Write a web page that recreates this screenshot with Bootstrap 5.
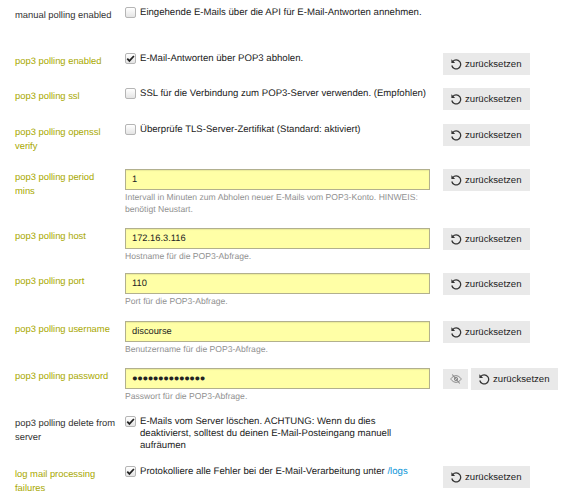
<!DOCTYPE html>
<html lang="de">
<head>
<meta charset="utf-8">
<title>Einstellungen</title>
<link rel="stylesheet" href="https://cdn.jsdelivr.net/npm/bootstrap@5.3.0/dist/css/bootstrap.min.css">
<style>
html,body{margin:0;background:#fff;overflow:hidden}
body{font-family:"Liberation Sans",Arial,sans-serif;font-size:9.6px;line-height:12px;color:#222;height:500px;text-rendering:geometricPrecision}
.setlist{padding:4px 15px 0}
.setrow{display:grid;grid-template-columns:110px 305px auto;align-items:start}
.setname{font-size:9.4px;line-height:14px;padding-right:9.5px;padding-top:1px;color:#333}
.setname.chg{color:#a8a800}
.setbody{min-width:0}
.setact{display:flex;gap:3px;margin-left:13px}
.h49{height:49px}.h35{height:35px}.h36{height:36px}.h45{height:45px}.h59{height:59px}.h48{height:48px}.h47{height:47px}.h51{height:51px}
.firstname{padding-top:4px}
.firstbody{grid-column:2/4;padding-top:3px}
.chkline{display:flex;gap:4px;align-items:flex-start}
.chkbox{flex:none;width:11px;height:11px;margin-top:0;border:1px solid #b5b5b5;border-radius:2px;background:linear-gradient(#fff,#e4e4e4);display:flex;align-items:center;justify-content:center}
.chkbox svg{width:9px;height:9px;display:block}
.chktext{max-width:262px}
.fieldbox{display:block;width:305px;height:21px;border:1px solid #b2b08e;background:#ffffa6;padding:0 6px;font-size:9.3px;line-height:19px;color:#222;box-shadow:inset 0 1px 1px rgba(0,0,0,.08)}
.pwdots{letter-spacing:-.4px}
.fieldhelp{color:#919191;font-size:8.6px;line-height:11.5px;margin-top:2px}
.rstbtn{display:inline-flex;align-items:center;gap:3px;height:22px;padding:0 8px 0 7px;background:#e9e9e9;color:#222;font-size:9.6px;border:0;border-radius:0;white-space:nowrap}
.eyebtn{display:inline-flex;align-items:center;justify-content:center;width:25px;height:20px;margin-top:1px;background:#e9e9e9;border:0;padding:0}
.rsticon{width:12px;height:12px;display:block}
.logslink{color:#0a95d8;text-decoration:none}
.delbody{padding-top:1px}
</style>
</head>
<body>
<svg width="0" height="0" class="d-block" style="position:absolute" aria-hidden="true"><defs>
<symbol id="undo" viewBox="0 0 16 16"><path d="M3.6 4.8A6 6 0 1 1 2.4 10" fill="none" stroke="#333" stroke-width="1.7"/><path d="M1.8 1.8v5h5z" fill="#333"/></symbol>
<symbol id="tick" viewBox="0 0 10 10"><path d="M1.4 5.2l2.4 2.5L8.8 2.2" fill="none" stroke="#222" stroke-width="1.9"/></symbol>
</defs></svg>
<div class="setlist">
  <div class="setrow h49">
    <div class="setname firstname">manual polling enabled</div>
    <div class="setbody firstbody"><div class="chkline"><span class="chkbox"></span><span>Eingehende E-Mails über die API für E-Mail-Antworten annehmen.</span></div></div>
  </div>
  <div class="setrow h35">
    <div class="setname chg">pop3 polling enabled</div>
    <div class="setbody"><div class="chkline"><span class="chkbox"><svg><use href="#tick"/></svg></span><span>E-Mail-Antworten über POP3 abholen.</span></div></div>
    <div class="setact"><button class="rstbtn"><svg class="rsticon"><use href="#undo"/></svg>zurücksetzen</button></div>
  </div>
  <div class="setrow h36">
    <div class="setname chg">pop3 polling ssl</div>
    <div class="setbody"><div class="chkline"><span class="chkbox"></span><span>SSL für die Verbindung zum POP3-Server verwenden. (Empfohlen)</span></div></div>
    <div class="setact"><button class="rstbtn"><svg class="rsticon"><use href="#undo"/></svg>zurücksetzen</button></div>
  </div>
  <div class="setrow h45">
    <div class="setname chg">pop3 polling openssl verify</div>
    <div class="setbody"><div class="chkline"><span class="chkbox"></span><span>Überprüfe TLS-Server-Zertifikat (Standard: aktiviert)</span></div></div>
    <div class="setact"><button class="rstbtn"><svg class="rsticon"><use href="#undo"/></svg>zurücksetzen</button></div>
  </div>
  <div class="setrow h59">
    <div class="setname chg">pop3 polling period mins</div>
    <div class="setbody"><span class="fieldbox">1</span><div class="fieldhelp">Intervall in Minuten zum Abholen neuer E-Mails vom POP3-Konto. HINWEIS: benötigt Neustart.</div></div>
    <div class="setact"><button class="rstbtn"><svg class="rsticon"><use href="#undo"/></svg>zurücksetzen</button></div>
  </div>
  <div class="setrow h45">
    <div class="setname chg">pop3 polling host</div>
    <div class="setbody"><span class="fieldbox">172.16.3.116</span><div class="fieldhelp">Hostname für die POP3-Abfrage.</div></div>
    <div class="setact"><button class="rstbtn"><svg class="rsticon"><use href="#undo"/></svg>zurücksetzen</button></div>
  </div>
  <div class="setrow h48">
    <div class="setname chg">pop3 polling port</div>
    <div class="setbody"><span class="fieldbox">110</span><div class="fieldhelp">Port für die POP3-Abfrage.</div></div>
    <div class="setact"><button class="rstbtn"><svg class="rsticon"><use href="#undo"/></svg>zurücksetzen</button></div>
  </div>
  <div class="setrow h47">
    <div class="setname chg">pop3 polling username</div>
    <div class="setbody"><span class="fieldbox">discourse</span><div class="fieldhelp">Benutzername für die POP3-Abfrage.</div></div>
    <div class="setact"><button class="rstbtn"><svg class="rsticon"><use href="#undo"/></svg>zurücksetzen</button></div>
  </div>
  <div class="setrow h47">
    <div class="setname chg">pop3 polling password</div>
    <div class="setbody"><span class="fieldbox pwdots">●●●●●●●●●●●●●●</span><div class="fieldhelp">Passwort für die POP3-Abfrage.</div></div>
    <div class="setact">
      <button class="eyebtn" aria-label="Passwort anzeigen"><svg width="12" height="12" viewBox="0 0 16 16"><path d="M1 8s2.6-4.5 7-4.5S15 8 15 8s-2.6 4.5-7 4.5S1 8 1 8z" fill="none" stroke="#888" stroke-width="1.3"/><circle cx="8" cy="8" r="2.2" fill="none" stroke="#888" stroke-width="1.3"/><path d="M3 2l10 12" stroke="#888" stroke-width="1.4"/></svg></button>
      <button class="rstbtn"><svg class="rsticon"><use href="#undo"/></svg>zurücksetzen</button>
    </div>
  </div>
  <div class="setrow h51">
    <div class="setname">pop3 polling delete from server</div>
    <div class="setbody delbody"><div class="chkline"><span class="chkbox"><svg><use href="#tick"/></svg></span><span class="chktext">E-Mails vom Server löschen. ACHTUNG: Wenn du dies deaktivierst, solltest du deinen E-Mail-Posteingang manuell aufräumen</span></div></div>
  </div>
  <div class="setrow">
    <div class="setname chg">log mail processing failures</div>
    <div class="setbody"><div class="chkline"><span class="chkbox"><svg><use href="#tick"/></svg></span><span>Protokolliere alle Fehler bei der E-Mail-Verarbeitung unter <a href="#" class="logslink">/logs</a></span></div></div>
    <div class="setact"><button class="rstbtn"><svg class="rsticon"><use href="#undo"/></svg>zurücksetzen</button></div>
  </div>
</div>
</body>
</html>
